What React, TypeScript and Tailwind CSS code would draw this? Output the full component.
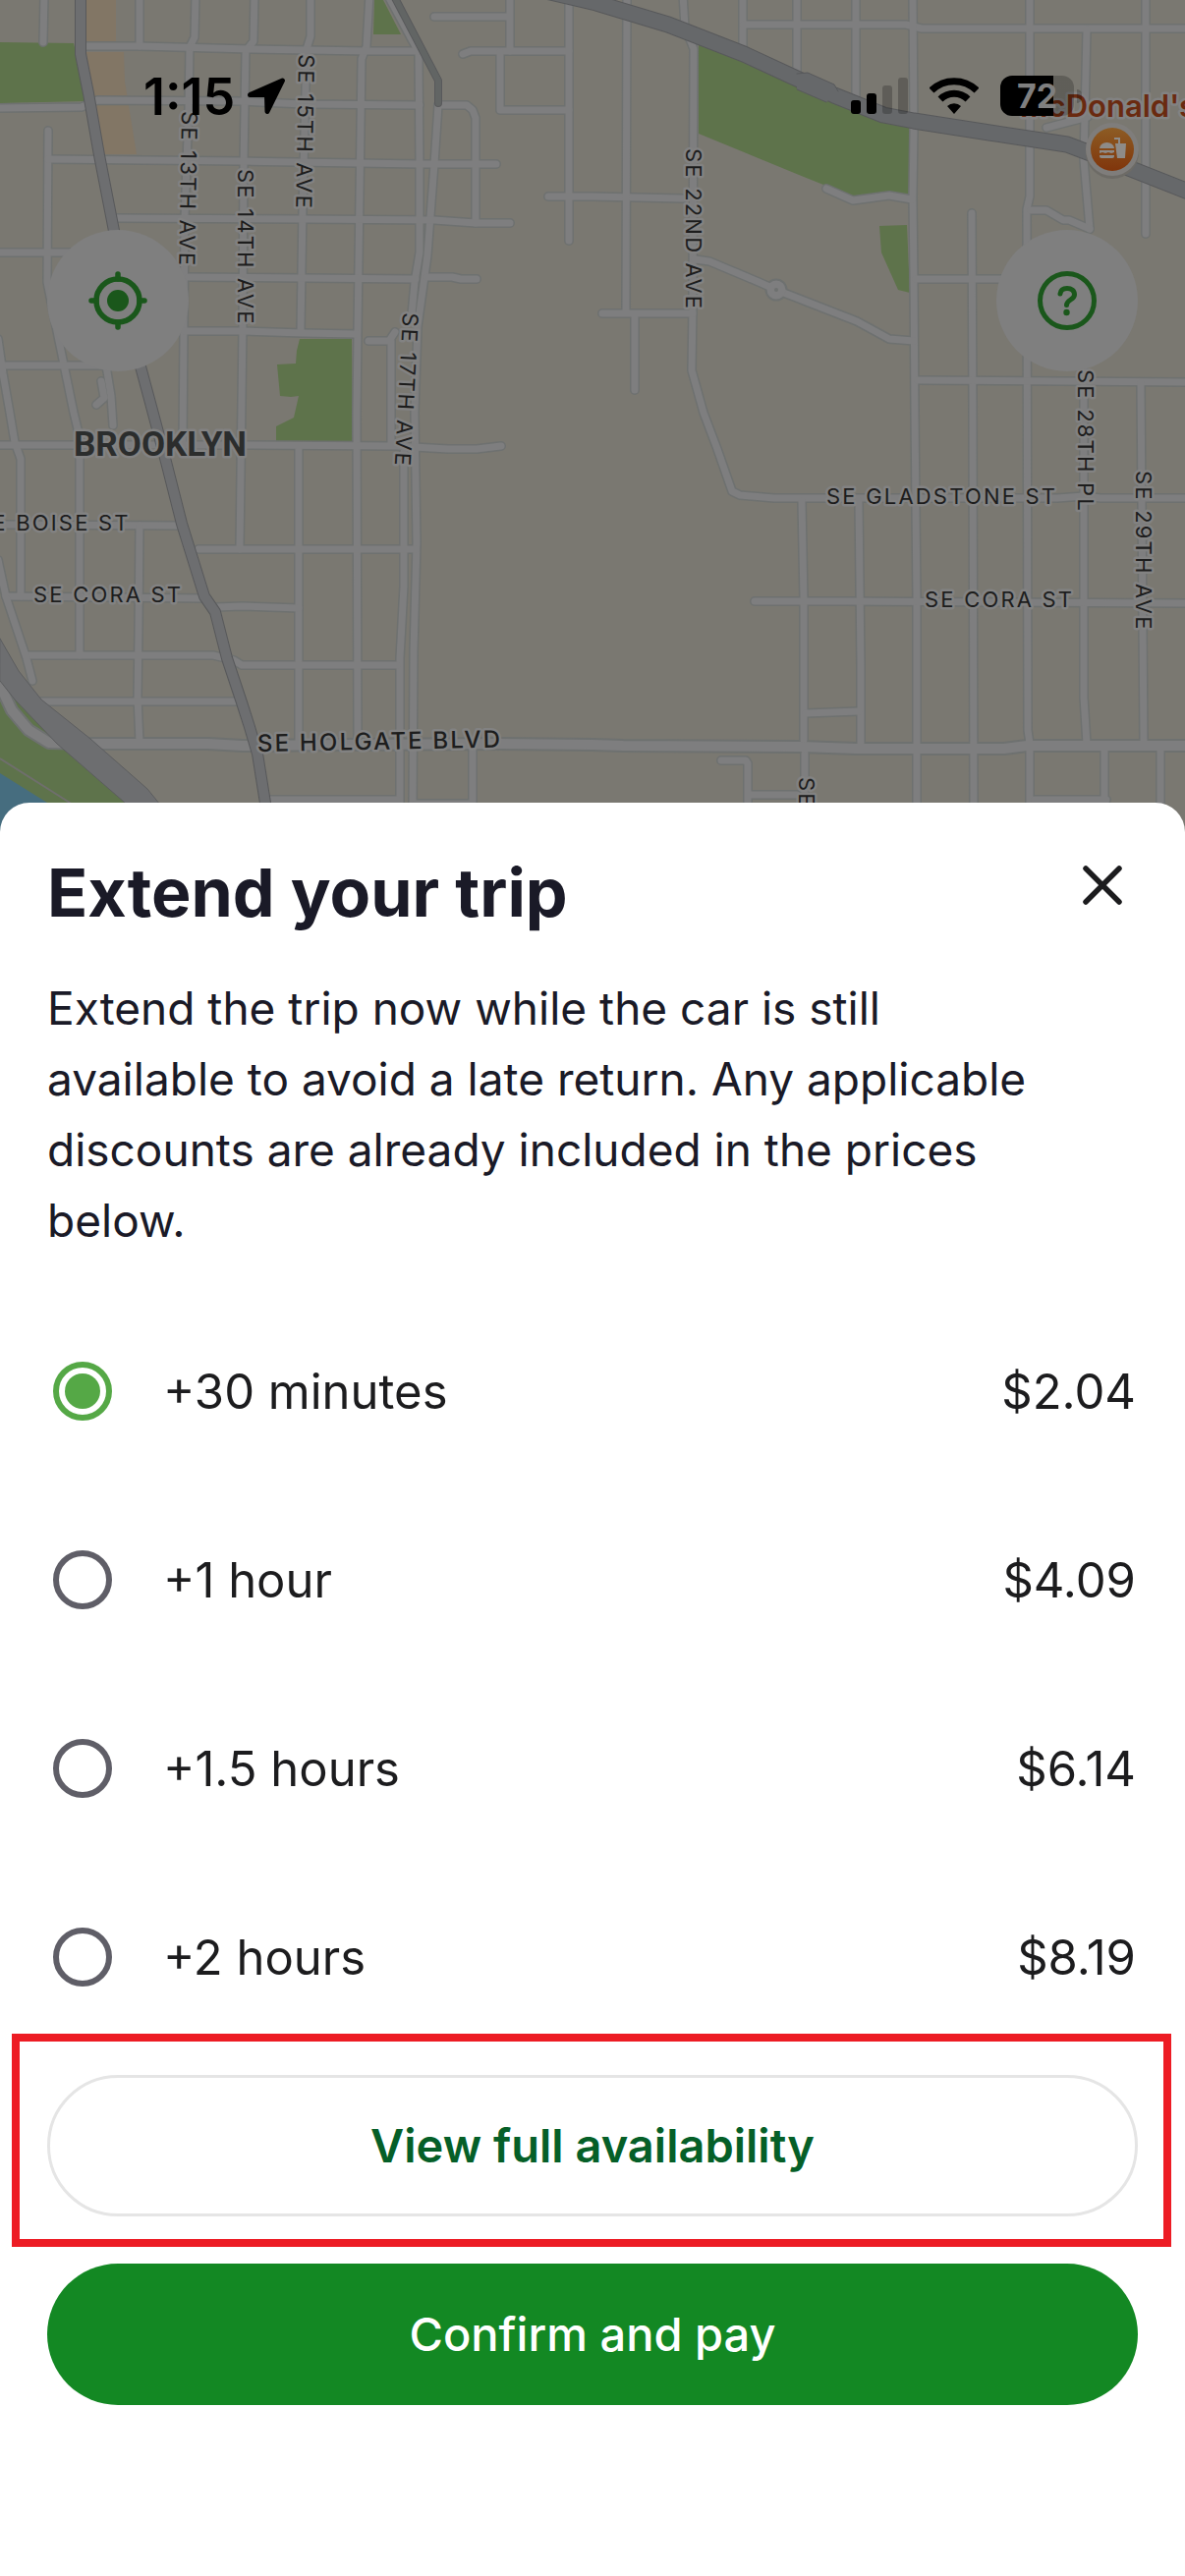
import { useState } from "react";

const streets = [
  "M45 -6 L44 43",
  "M49 133 L48 287 L58 337 L75 420 L81 445 L81 667",
  "M142 -6 V47",
  "M199 -6 L198 38 L193 48 L192 110 L188 222 L187 337 L186 453",
  "M259 -6 L258 42 L250 52 L248 167 L247 333 L244 559",
  "M316 -6 L316 37 L312 50 L308 213 L306 338",
  "M304 455 V753",
  "M376 -6 L373 47 L368 60 L366 200 L364 337 L363 420 L364 750",
  "M394 -6 L426 53 L427 167 L427 257 L422 287 L419 320",
  "M446 107 L442 167 L435 260 L425 333 L422 420 L424 553 L421 663 L420 830",
  "M398 347 V453 M411 460 V597 L407 670 V830",
  "M375 347 H396 L402 338",
  "M88 47 L142 47 L254 50 L373 52 L425 52",
  "M-6 110 L83 109 L99 102 L246 103 L308 106 L427 107",
  "M446 107 H475 L481 112 L484 120 V227",
  "M49 162 L246 164 L427 167 L505 167",
  "M117 222 L308 223 L442 224 L484 227 L519 227",
  "M-6 257 H73",
  "M192 282 L423 284",
  "M435 282 H460 L469 284 H485",
  "M188 337 H246 L308 339 L363 340",
  "M-6 372 H108 L113 403 L115 433 M103 388 L106 405 L98 412",
  "M-2 345 L3 380 L10 420 L15 450 L21 467 L21 607",
  "M-6 453 H246 L404 454 L456 457 H485 L510 454",
  "M-6 534 L185 535",
  "M202 559 H423",
  "M6 607 L208 609",
  "M220 618 L246 617 L304 619",
  "M142 535 L141 643 L140 710 L142 755",
  "M27 667 H217 L238 672 L246 677 H404",
  "M42 714 H244",
  "M-2 570 L6 607 L27 670 L33 693",
  "M272 814 H404 M423 818 H481 M481 763 V830",
  "M442 17 H517 M519 -6 V52",
  "M471 55 L479 52 H579",
  "M509 53 V112 H579",
  "M579 -6 V245",
  "M558 200 H603 L695 202",
  "M638 -6 L637 317",
  "M695 -6 L697 27 L706 50 L705 313 L704 377 L716 420 L730 457 L745 500 L753 504 L788 507 H1076 L1103 505 L1120 507 H1212",
  "M613 319 H705 M646 320 V397",
  "M756 -6 V50 M811 -6 V73 M871 -6 V100",
  "M757 25 H922 L938 29 H1212",
  "M929 -6 L930 133 L929 200 L930 283 L931 420 L933 610 V830",
  "M1048 -6 V200 L1045 213 L1046 743 L1048 757 V830",
  "M1106 30 L1103 163 L1109 233 M1103 377 V710 L1106 757",
  "M1166 -6 V238",
  "M1065 130 L1107 119",
  "M1049 214 H1065 L1082 224 H1088 L1109 233",
  "M989 217 L990 410 L991 830",
  "M932 284 H1020 M934 387 L1212 389",
  "M1161 390 L1162 510 L1164 757",
  "M707 264 L722 266 L772 287 L790 295 L872 327 L905 345 L930 347",
  "M841 192 L868 204 L905 199 L928 203",
  "M816 510 L818 610 V753 M819 767 V830",
  "M874 510 L876 677 V757",
  "M768 612 H860 L1212 614",
  "M820 726 L874 724",
  "M1124 763 V830 M1181 763 V830 M1053 814 H1126",
  "M734 774 H759 L761 777 V830 M765 809 H811",
];

const arterials = [
  "M-2 693 L12 723 L29 743 L50 756 L92 757 H212 L246 759 L350 758 L508 757 L603 758 L634 759 L815 760 L872 762 H1022 L1045 759 H1212",
];

const highways = [
  { d: "M82 -6 V55 L90 95 L101 158 L117 240 L143 373 L153 410 L169 470 L185 533 L208 607 L219 623 L231 670 L246 715 L254 740 L262 767 L272 830", w: 10, c: "#6d6e70" },
  { d: "M400 -6 L446 82 V105", w: 6, c: "#626564" },
  { d: "M560 -8 L607 3 L680 25 L757 55 L811 80 L849 97 L899 117 L930 123 L1007 135 L1086 147 L1141 168 L1212 196", w: 15, c: "#66686a" },
];

type Label = { text: string; x: number; y: number; angle?: number };

const labels: Label[] = [
  { text: "SE 13TH AVE", x: 185, y: 113, angle: 91 },
  { text: "SE 14TH AVE", x: 242, y: 172, angle: 90 },
  { text: "SE 15TH AVE", x: 304, y: 55, angle: 91 },
  { text: "SE 17TH AVE", x: 410, y: 318, angle: 93 },
  { text: "SE 22ND AVE", x: 698, y: 151, angle: 90 },
  { text: "SE 28TH PL", x: 1097, y: 376, angle: 90 },
  { text: "SE 29TH AVE", x: 1156, y: 479, angle: 90 },
  { text: "SE 21ST AVE", x: 813, y: 791, angle: 90 },
  { text: "SE BOISE ST", x: -24, y: 540 },
  { text: "SE CORA ST", x: 34, y: 613 },
  { text: "SE GLADSTONE ST", x: 841, y: 513 },
  { text: "SE CORA ST", x: 941, y: 618 },
];

function MapBackground() {
  return (
    <svg
      className="absolute left-0 top-0 h-[860px] w-full"
      viewBox="0 0 1206 860"
      preserveAspectRatio="xMidYMin slice"
      aria-label="Map"
    >
      <defs>
        <linearGradient id="food" x1="0" y1="0" x2="0" y2="1">
          <stop offset="0" stopColor="#8d5c24" />
          <stop offset="1" stopColor="#80350b" />
        </linearGradient>
      </defs>
      <rect width="1206" height="860" fill="#7a7871" />
      <g fill="#5e734b">
        <path d="M0 43 L75 44 L88 103 L0 105Z" />
        <path d="M381 0 H390 L408 35 H380Z" />
        <path d="M305 345 H358 L359 449 H281 V434 L299 425 L304 403 L296 404 L285 403 L282 371 L301 370 L302 357Z" />
        <path d="M711 45 L811 85 L925 125 V197 L868 200 L818 180 L711 136Z" />
        <path d="M895 230 L923 229 L926 298 L914 295 L897 257Z" />
        <path d="M0 700 L165 830 V860 H0Z" />
      </g>
      <g fill="#827665">
        <path d="M88 0 H118 V42 H88Z" />
        <path d="M88 53 H126 L127 83 L139 157 H106 L96 110Z" />
      </g>
      <path d="M0 787 L48 817 L110 860 H0Z" fill="#466d7f" />
      <path d="M0 772 L71 817 L130 860" fill="none" stroke="#6f6f6c" strokeWidth="2" />
      <g fill="none" strokeLinecap="round" strokeLinejoin="round">
        <g stroke="#6e7170" strokeWidth="10">
          {streets.map((d) => <path key={d} d={d} />)}
        </g>
        <g stroke="#6e7170" strokeWidth="14">
          {arterials.map((d) => <path key={d} d={d} />)}
        </g>
        <circle cx="790" cy="295" r="7" stroke="#6e7170" strokeWidth="9" />
        <g stroke="#7e7e7f" strokeWidth="7">
          {streets.map((d) => <path key={d} d={d} />)}
        </g>
        <g stroke="#7e7e7f" strokeWidth="10">
          {arterials.map((d) => <path key={d} d={d} />)}
        </g>
        <circle cx="790" cy="295" r="6" stroke="#7e7e7f" strokeWidth="7" />
        <circle cx="790" cy="295" r="2" fill="#6e7170" stroke="none" />
        {highways.map((h) => (
          <g key={h.d}>
            <path d={h.d} stroke="#58595b" strokeWidth={h.w + 2} />
            <path d={h.d} stroke={h.c} strokeWidth={h.w} />
          </g>
        ))}
        <path d="M811 75 L822 74 L849 86 L853 93 L841 104 L811 91Z" fill="#66686a" />
        <path d="M811 75 L822 74 L849 86 L853 93 M841 104 L811 91" stroke="#58595b" strokeWidth="1" />
        <path d="M0 650 L19 683 L42 712 L92 752 L150 803 L180 840 H145 L127 817 L58 757 L15 712 L0 693Z" fill="#6d6e70" stroke="#5c5d5f" strokeWidth="1" />
      </g>
      <g
        className="font-[Inter,sans-serif] text-[22px] tracking-widest"
        fill="#1d1d1d"
        stroke="#828282"
        strokeWidth="5"
        strokeLinejoin="round"
        paintOrder="stroke"
      >
        {labels.map((l) => (
          <text key={l.text + l.x} transform={`translate(${l.x} ${l.y}) rotate(${l.angle ?? 0})`}>
            {l.text}
          </text>
        ))}
        <text className="text-[24px] font-medium" transform="translate(262 765) rotate(-1)">
          SE HOLGATE BLVD
        </text>
        <text className="font-[Roboto,sans-serif] text-[35px] font-bold tracking-normal" x="75" y="464" fill="#2b2d2d">
          BROOKLYN
        </text>
        <text className="text-[31px] font-semibold tracking-normal" x="1038" y="119" fill="#6a2a10">
          McDonald's
        </text>
      </g>
      <circle cx="1132" cy="155" r="27" fill="#6d6b66" />
      <circle cx="1132" cy="152" r="27" fill="#7f7d7b" />
      <circle cx="1132" cy="152" r="22" fill="url(#food)" />
      <g fill="#8e8b88">
        <path d="M1119 151 a7.500 6 0 0 1 15 0Z" />
        <path d="M1119 153 h15 v2 l-3 1 -3 -1 -3 1 -3 -1 -3 1Z" />
        <path d="M1119 158 h15 v1 a2 2 0 0 1 -2 2 h-11 a2 2 0 0 1 -2 -2Z" />
        <path d="M1135 146 h11 l-1 15 h-8Z" />
        <path d="M1134 141 h5 v5" fill="none" stroke="#8e8b88" strokeWidth="2" />
      </g>
    </svg>
  );
}

function StatusBar() {
  return (
    <div className="relative flex h-[118px] items-end justify-between pl-[146px] pr-[105px] text-black">
      <div className="flex items-end gap-3">
        <span className="text-[52px] font-semibold leading-[39px]">1:15</span>
        <svg className="h-[40px] w-[40px]" viewBox="0 0 40 40" aria-hidden="true">
          <path
            d="M36.500 4 L21 35.500 L20.500 18.500 H3.500Z"
            fill="currentColor"
            stroke="currentColor"
            strokeWidth="5"
            strokeLinejoin="round"
          />
        </svg>
      </div>
      <div className="flex items-end gap-[22px]">
        <svg className="mb-[2px] h-[38px] w-[58px]" viewBox="0 0 58 38" aria-label="Signal">
          <rect x="0" y="24" width="10" height="14" rx="3" />
          <rect x="16" y="17" width="10" height="21" rx="3" />
          <rect x="32" y="9" width="10" height="29" rx="3" fill="#000" fillOpacity=".22" />
          <rect x="48" y="1" width="10" height="37" rx="3" fill="#000" fillOpacity=".22" />
        </svg>
        <svg className="mb-[2px] h-[38px] w-[50px]" viewBox="0 0 50 38" aria-label="Wi-Fi">
          <g fill="none" stroke="currentColor" strokeWidth="7">
            <path d="M2 14 a33 33 0 0 1 46 0" />
            <path d="M11 23 a20 20 0 0 1 28 0" />
          </g>
          <path d="M25 38 L18 30 a10 10 0 0 1 14 0Z" />
        </svg>
        <div className="flex items-center gap-[3px]">
          <div className="flex h-[41px] w-[75px] items-center justify-center rounded-[12px] bg-[linear-gradient(90deg,#000_72%,#00000038_72%)] text-[34px] font-bold text-[#7f7f7f]">
            72
          </div>
          <div className="h-[14px] w-[5px] rounded-r-full bg-[#00000038]" />
        </div>
      </div>
    </div>
  );
}

function MapControls() {
  return (
    <div className="relative mt-[116px] flex justify-between px-12 text-[#1a571b]">
      <button type="button" aria-label="My location" className="grid size-36 place-items-center rounded-full bg-[#7f7f7f]">
        <svg className="size-[62px]" viewBox="0 0 62 62" fill="none" stroke="currentColor" strokeWidth="5.500" strokeLinecap="round">
          <circle cx="31" cy="31" r="22" />
          <circle cx="31" cy="31" r="11" fill="currentColor" stroke="none" />
          <path d="M31 4 V9 M31 53 V58 M4 31 H9 M53 31 H58" />
        </svg>
      </button>
      <button type="button" aria-label="Help" className="grid size-36 place-items-center rounded-full bg-[#7f7f7f]">
        <svg className="size-[62px]" viewBox="0 0 62 62" fill="none" stroke="currentColor" strokeWidth="5" strokeLinecap="round">
          <circle cx="31" cy="31" r="27.500" />
          <path d="M24 24 C24.500 20 27 18.500 31 18.500 C35.500 18.500 38.500 21 38.500 25 C38.500 30 30.500 30 30.500 35.500" />
          <circle cx="30.500" cy="43" r="3.200" fill="currentColor" stroke="none" />
        </svg>
      </button>
    </div>
  );
}

const options = [
  { id: "30m", label: "+30 minutes", price: "$2.04" },
  { id: "1h", label: "+1 hour", price: "$4.09" },
  { id: "90m", label: "+1.5 hours", price: "$6.14" },
  { id: "2h", label: "+2 hours", price: "$8.19" },
];

export default function App() {
  const [selected, setSelected] = useState("30m");

  return (
    <main className="relative flex min-h-screen flex-col overflow-x-hidden bg-white font-[Inter,sans-serif]">
      <MapBackground />
      <header className="h-[817px]">
        <StatusBar />
        <MapControls />
      </header>

      <section className="relative flex-1 rounded-t-[30px] bg-white px-12 pb-16 text-[#1a1a27]">
        <div className="flex items-start justify-between pt-[47px]">
          <h1 className="text-[68px] font-bold leading-[88px]">Extend your trip</h1>
          <button type="button" aria-label="Close" className="mr-3 mt-[13px] grid size-12 place-items-center text-[#1c1c1e]">
            <svg className="size-12" viewBox="0 0 48 48" fill="none" stroke="currentColor" strokeWidth="5.500" strokeLinecap="round">
              <path d="M7 7 L41 41 M41 7 L7 41" />
            </svg>
          </button>
        </div>

        <p className="mt-[38px] max-w-[1040px] text-[46px] leading-[72px]">
          Extend the trip now while the car is still available to avoid a late return. Any applicable
          discounts are already included in the prices below.
        </p>

        <fieldset className="mt-[42px] text-[#1c1c1e]">
          <legend className="sr-only">Trip extension</legend>
          {options.map((o) => (
            <label key={o.id} htmlFor={o.id} className="flex h-48 items-center pl-[6px] pr-[2px] text-[49px]">
              <input
                id={o.id}
                type="radio"
                name="extension"
                checked={selected === o.id}
                onChange={() => setSelected(o.id)}
                className="grid size-[60px] appearance-none place-items-center rounded-full border-[6px] border-[#5f5e67] before:size-9 before:rounded-full before:content-[''] checked:border-[#55a846] checked:before:bg-[#55a846]"
              />
              <span className="ml-[52px] flex-1 pt-[2px]">{o.label}</span>
              <span className="pt-[2px]">{o.price}</span>
            </label>
          ))}
        </fieldset>

        <div className="relative mt-6">
          <button type="button" className="h-36 w-full rounded-full border-[3px] border-[#e5e5e5] text-[47px] font-semibold text-[#055f28]">
            View full availability
          </button>
          <div className="pointer-events-none absolute -bottom-[31px] -left-9 -right-[34px] -top-[42px] border-8 border-[#ed1c24]" />
        </div>
        <button type="button" className="mt-12 h-36 w-full rounded-full bg-[#138823] text-[47px] font-medium text-white">
          Confirm and pay
        </button>
      </section>
    </main>
  );
}
